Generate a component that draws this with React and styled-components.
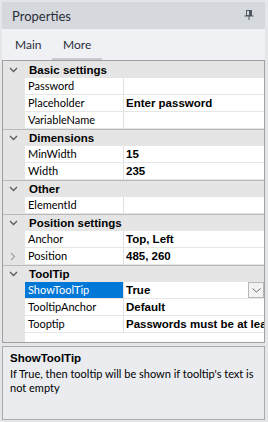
import React from "react";
import styled, { createGlobalStyle } from "styled-components";

const GlobalStyle = createGlobalStyle`
  body {
    margin: 0;
    background: #e4e6e9;
    font-family: Lato, "Liberation Sans", sans-serif;
  }
`;

const boldFont = `"Liberation Sans", Arial, sans-serif`;

const sections = [
  {
    title: "Basic settings",
    rows: [
      { name: "Password", value: "" },
      { name: "Placeholder", value: "Enter password" },
      { name: "VariableName", value: "" },
    ],
  },
  {
    title: "Dimensions",
    rows: [
      { name: "MinWidth", value: "15" },
      { name: "Width", value: "235" },
    ],
  },
  {
    title: "Other",
    rows: [{ name: "ElementId", value: "" }],
  },
  {
    title: "Position settings",
    rows: [
      { name: "Anchor", value: "Top, Left" },
      { name: "Position", value: "485, 260", expandable: true },
    ],
  },
  {
    title: "ToolTip",
    rows: [
      { name: "ShowToolTip", value: "True", selected: true, dropdown: true },
      { name: "TooltipAnchor", value: "Default" },
      { name: "Tooptip", value: "Passwords must be at least 8 characters" },
    ],
  },
];

const PropertiesPanel = () => {
  return (
    <Frame>
      <TitleBar>
        <span>Properties</span>
        <svg width="10" height="11" viewBox="0 0 10 11">
          <rect x="2.5" y="0.5" width="5" height="5" fill="none" stroke="#4f5761" />
          <rect x="5" y="1" width="2" height="4.5" fill="#4f5761" />
          <line x1="0.5" y1="6" x2="9.5" y2="6" stroke="#4f5761" />
          <line x1="5" y1="6" x2="5" y2="10" stroke="#4f5761" />
        </svg>
      </TitleBar>
      <Tabs>
        <Tab>Main</Tab>
        <Tab active>More</Tab>
      </Tabs>
      <Grid>
        {sections.map((section, si) => (
          <React.Fragment key={section.title}>
            <CategoryRow first={si === 0}>
              <Gutter>
                <svg width="9" height="6" viewBox="0 0 9 6">
                  <path d="M1 1 L4.5 4.5 L8 1" fill="none" stroke="#5a5a5a" strokeWidth="1.3" />
                </svg>
              </Gutter>
              <CategoryLabel>{section.title}</CategoryLabel>
            </CategoryRow>
            {section.rows.map((row) => (
              <PropRow key={row.name}>
                <Gutter>
                  {row.expandable && (
                    <svg width="6" height="9" viewBox="0 0 6 9">
                      <path d="M1 1 L4.5 4.5 L1 8" fill="none" stroke="#a6a6a6" strokeWidth="1.3" />
                    </svg>
                  )}
                </Gutter>
                <NameCell selected={row.selected}>{row.name}</NameCell>
                <ValueCell>
                  <ValueText>{row.value}</ValueText>
                  {row.dropdown && (
                    <DropButton>
                      <svg width="9" height="5" viewBox="0 0 9 5">
                        <path d="M0.5 0.5 L4.5 4 L8.5 0.5" fill="none" stroke="#6b6b6b" strokeWidth="1" />
                      </svg>
                    </DropButton>
                  )}
                </ValueCell>
              </PropRow>
            ))}
          </React.Fragment>
        ))}
      </Grid>
      <Description>
        <DescTitle>ShowToolTip</DescTitle>
        <DescText>If True, then tooltip will be shown if tooltip's text is not empty</DescText>
      </Description>
    </Frame>
  );
};

const Frame = styled.div`
  width: 268px;
  height: 422px;
  box-sizing: border-box;
  padding: 2px 3px 2px 2px;
  display: flex;
  flex-direction: column;
  background: #e4e6e9;
  overflow: hidden;
`;

const TitleBar = styled.div`
  height: 27px;
  flex-shrink: 0;
  display: flex;
  align-items: center;
  justify-content: space-between;
  padding: 0 11px 0 10px;
  background: #d5d8dc;
  color: #2b2d3a;
  font-size: 13px;

  span {
    margin-top: 1px;
  }
`;

const Tabs = styled.div`
  height: 31px;
  flex-shrink: 0;
  display: flex;
  align-items: flex-end;
  padding-left: 4px;
  background: #eff1f5;
`;

const Tab = styled.div`
  box-sizing: border-box;
  height: 29px;
  padding: 6px 12px 0 ${(p) => (p.active ? "11px" : "9px")};
  width: ${(p) => (p.active ? "50px" : "46px")};
  font-size: 12px;
  color: #2b2d3a;
  border-bottom: 2px solid ${(p) => (p.active ? "#c9cbcf" : "transparent")};
`;

const Grid = styled.div`
  height: 283px;
  flex-shrink: 0;
  box-sizing: border-box;
  border: 1px solid #a0a0a0;
  background: linear-gradient(to right, #e5e5e5 22px, #ffffff 22px);
  font-size: 11px;
  color: #000;
  overflow: hidden;
`;

const CategoryRow = styled.div`
  height: 17px;
  box-sizing: border-box;
  display: grid;
  grid-template-columns: 22px 1fr;
  align-items: center;
  background: #e5e5e5;
  border-top: ${(p) => (p.first ? "none" : "1px solid #b9b9b9")};
`;

const CategoryLabel = styled.div`
  font-family: ${boldFont};
  font-weight: 700;
  font-size: 11.5px;
  padding-left: 4px;
`;

const PropRow = styled.div`
  height: 17px;
  display: grid;
  grid-template-columns: 22px 99px 1fr;
`;

const Gutter = styled.div`
  display: flex;
  align-items: center;
  justify-content: center;
  padding-right: 2px;
  background: #e5e5e5;
`;

const NameCell = styled.div`
  box-sizing: border-box;
  padding-left: 3px;
  line-height: 16px;
  white-space: nowrap;
  overflow: hidden;
  border-bottom: 1px solid #e6e6e6;
  border-right: 1px solid #e0e0e0;
  background: ${(p) => (p.selected ? "#0078d7" : "#ffffff")};
  color: ${(p) => (p.selected ? "#ffffff" : "#000000")};
`;

const ValueCell = styled.div`
  box-sizing: border-box;
  display: flex;
  align-items: stretch;
  min-width: 0;
  padding-left: 2px;
  border-bottom: 1px solid #e6e6e6;
  background: #ffffff;
`;

const ValueText = styled.div`
  flex: 1;
  min-width: 0;
  font-family: ${boldFont};
  font-size: 11.5px;
  line-height: 16px;
  font-weight: 700;
  white-space: nowrap;
  overflow: hidden;
`;

const DropButton = styled.div`
  width: 16px;
  box-sizing: border-box;
  display: flex;
  align-items: center;
  justify-content: center;
  border: 1px solid #b8b8b8;
  background: #f3f3f3;
`;

const Description = styled.div`
  flex: 1;
  margin-top: 3px;
  box-sizing: border-box;
  border: 1px solid #a9abaf;
  background: #eaecf0;
  padding: 4px 8px 0 7px;
  color: #000;
`;

const DescTitle = styled.div`
  font-family: ${boldFont};
  font-size: 11.5px;
  font-weight: 700;
  line-height: 15px;
`;

const DescText = styled.div`
  font-size: 11px;
  line-height: 14px;
  margin-top: 1px;
`;

const App = () => (
  <>
    <GlobalStyle />
    <PropertiesPanel />
  </>
);

export default App;
